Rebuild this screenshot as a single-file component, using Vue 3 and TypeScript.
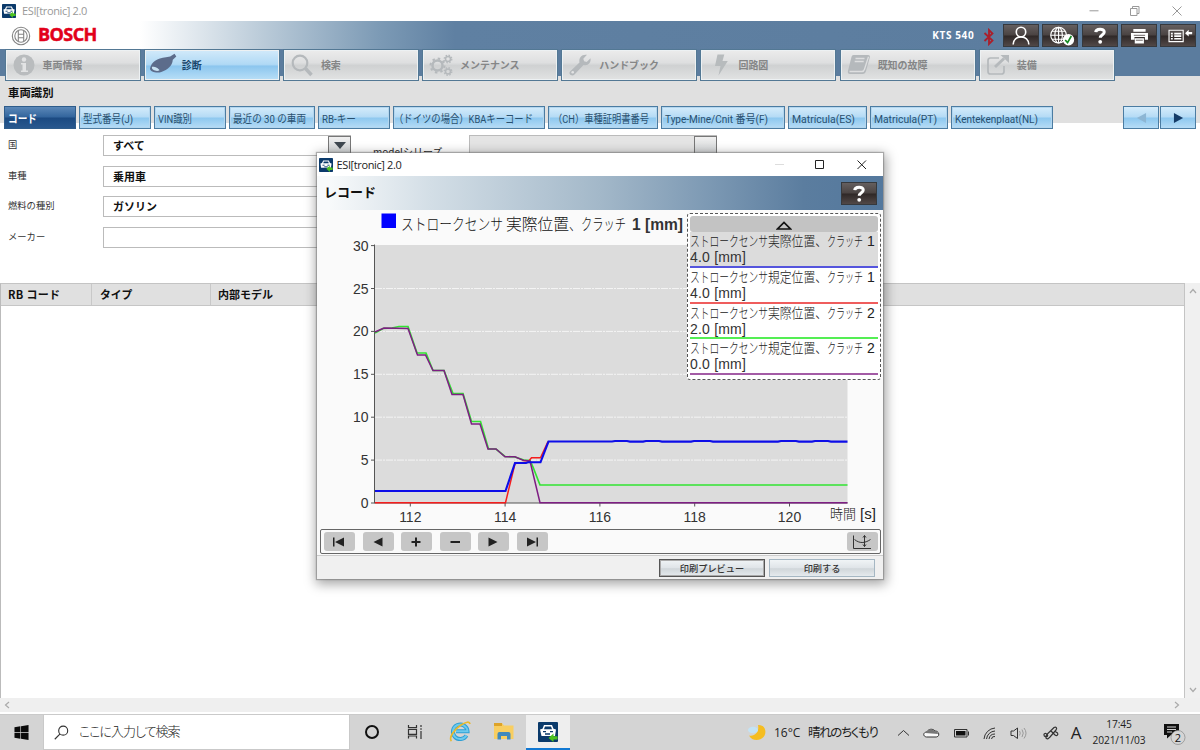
<script setup lang="ts">
interface Tab { label: string; icon: string; active?: boolean }
const tabs: Tab[] = [
  { label: '車両情報', icon: 'info' },
  { label: '診断', icon: 'plug', active: true },
  { label: '検索', icon: 'search' },
  { label: 'メンテナンス', icon: 'gears' },
  { label: 'ハンドブック', icon: 'wrench' },
  { label: '回路図', icon: 'bolt' },
  { label: '既知の故障', icon: 'book' },
  { label: '装備', icon: 'export' },
]

interface SubTab { label: string; width: number; text: number; pad?: number }
const subTabs: SubTab[] = [
  { label: 'コード', width: 72, text: 29 },
  { label: '型式番号(J)', width: 72, text: 50 },
  { label: 'VIN識別', width: 72, text: 34 },
  { label: '最近の 30 の車両', width: 86, text: 73 },
  { label: 'RB-キー', width: 72, text: 34 },
  { label: '（ドイツの場合）KBAキーコード', width: 152, text: 139, pad: -3 },
  { label: '（CH）車種証明書番号', width: 110, text: 96, pad: 1 },
  { label: 'Type-Mine/Cnit 番号(F)', width: 124, text: 103 },
  { label: 'Matrícula(ES)', width: 79, text: 63 },
  { label: 'Matricula(PT)', width: 78, text: 63 },
  { label: 'Kentekenplaat(NL)', width: 102, text: 83 },
]

const tools = ['user', 'globe', 'help', 'print', 'list']

const filters = [
  { label: '国', value: 'すべて' },
  { label: '車種', value: '乗用車' },
  { label: '燃料の種別', value: 'ガソリン' },
  { label: 'メーカー', value: '' },
]

const legend = [
  { kind: '実際位置、', clutch: '1', value: '4.0 [mm]', tone: 'blue' },
  { kind: '規定位置、', clutch: '1', value: '4.0 [mm]', tone: 'red' },
  { kind: '実際位置、', clutch: '2', value: '2.0 [mm]', tone: 'green' },
  { kind: '規定位置、', clutch: '2', value: '0.0 [mm]', tone: 'purple' },
]

const yTicks = [30, 25, 20, 15, 10, 5, 0].map((v) => ({ v, y: 503 - v * 8.58 }))
const xTicks = [112, 114, 116, 118, 120].map((v) => ({ v, x: 410.3 + (v - 112) * 47.4 }))

const series = [
  { tone: 'green', points: '375,333 383,328.5 392,328 399,326.5 408,326.5 417,353 426,353 433,370.5 444,370.5 453,393.5 463,393.5 471.5,421.5 480.5,421.5 488.5,449 496,449 505,456.5 515,457 524,460 530,460.5 533,467 540,485 847.5,485' },
  { tone: 'red', points: '375,502.7 505.5,502.7 515,463.5 528,462 531.5,457.7 540.5,457.7 548,441.5' },
  { tone: 'purple', points: '375,332 384,328 408,328.5 417.5,355 425.5,355 433,370.5 444,370.5 452,394.5 463,394.5 471.5,424 480,424 488,449 496,449 505,456.7 515,456.7 523,460.3 530,461 540,502.7 847.5,502.7' },
  { tone: 'blue', points: '375,491 505.5,491 515,463 526,463 528,462.3 540.5,462.3 548.5,441.5 612,441.5 615,441 627,441 630,441.6 643,441.6 646,441 659,441 662,441.6 691,441.6 694,441 710,441 713,441.6 778,441.6 781,441 796,441 799,441.6 812,441.6 815,441 828,441 831,441.6 847.5,441.6' },
]

const players = ['first', 'prev', 'plus', 'minus', 'next', 'last']
</script>

<template>
  <div class="screen">
    <header class="titlebar">
      <svg class="app-icon" viewBox="0 0 20 20"><rect width="20" height="20" rx="1" fill="#0b3a6b" /><path d="m2 8 2.300-.8L6 3.500h8l1.700 3.700L18 8l-1 6H3z" fill="#fff" /><path d="M7 5h6l1 2.500H6z" fill="#0b3a6b" /><path d="M5 10.300h3M12 10.300h3M7.500 12.600h5" stroke="#0b3a6b" stroke-width="1.300" /><path d="m10.500 15.500 5-4.500v2.700h4V17h-4v3z" fill="#4cc31e" /></svg>
      <span class="app-name">ESI[tronic] 2.0</span>
      <svg class="win-buttons faded" viewBox="0 0 100 20"><path d="M3.500 9.800h9M44.500 7.500h6.500v7h-6.500zM46.500 7.500v-2h6.500v7h-2M86.500 5.500l9 9M95.500 5.500l-9 9" /></svg>
    </header>

    <div class="brandbar">
      <svg class="emblem" viewBox="0 0 20 20"><circle cx="10" cy="10" r="8.700" /><circle cx="10" cy="10" r="6.200" /><path d="M7.300 4.600v10.800M12.700 4.600v10.800M7.300 8.200h5.400M7.300 11.800h5.400" /></svg>
      <span class="brand">BOSCH</span>
      <span class="device">KTS 540</span>
      <svg class="bluetooth" viewBox="0 0 14 18"><path d="m2.500 5 8 7.500L7 16V2l3.500 3.500-8 7.500" /></svg>
      <div class="tools">
        <button v-for="t in tools" :key="t" class="tool">
          <svg viewBox="0 0 36 22">
            <g v-if="t === 'user'" class="line"><circle cx="18" cy="7.300" r="5" /><path d="M9.700 20.500c.3-5 3.800-8 8.300-8s8 3 8.300 8" /></g>
            <g v-else-if="t === 'globe'">
              <g class="line thin"><circle cx="16.500" cy="10.700" r="8.300" /><ellipse cx="16.500" cy="10.700" rx="4" ry="8.300" /><path d="M16.500 2.500v16.500M8.200 10.700h16.600M9.500 6.500h14M9.500 15h14" /></g>
              <circle cx="27" cy="15.500" r="6" fill="#fff" /><path d="m23.500 15.800 2.500 2.700 4-7" fill="none" stroke="#168a23" stroke-width="1.800" />
            </g>
            <g v-else-if="t === 'help'"><path d="M13.500 7.500c.2-4 9-4.300 9-.2 0 3-4.200 2.700-4.200 6.200" fill="none" stroke="#fff" stroke-width="3.200" /><circle cx="18.200" cy="17.700" r="2" fill="#fff" /></g>
            <g v-else-if="t === 'print'"><path d="M12 4h13v3H12zM9.500 8.300h18v7.200h-3.300v-3h-11v3H9.500zM13.500 14h9.700v5.500h-9.700z" fill="#fff" /><path d="M14.700 16h7.300M12.500 10.800h12" stroke="#68605f" /></g>
            <g v-else><path d="M8.500 5.500h15v12h-15z" class="line thin" /><path d="M10.500 9h2M14 9h7.500M10.500 11.700h2M14 11.700h7.500M10.500 14.400h2M14 14.400h7.500" class="line" /><path d="m25.500 8.500 3.800-3.500v2.300H33v2.500h-3.700V12z" fill="#fff" /></g>
          </svg>
        </button>
      </div>
    </div>

    <nav class="tabs">
      <button v-for="t in tabs" :key="t.label" class="tab" :class="{ active: t.active }">
        <svg class="tab-icon" viewBox="0 0 28 24">
          <g v-if="t.icon === 'info'"><circle cx="14" cy="12" r="10.500" fill="#b9bcbe" /><circle cx="14" cy="6.500" r="2.200" fill="#e2e3e4" /><path d="M11 10h5v7.500h2V19h-7v-1.500h1.500v-6H11z" fill="#e2e3e4" /></g>
          <g v-else-if="t.icon === 'plug'"><path d="M1 15.500C2.500 9 8 5 17 4.300l4.200-.8L25.500.8l1.800 2.700-3.500 3.200c-.5 6.300-5 9.800-11.500 12.300-3.500 1.300-11.300.5-11.300-3.500z" fill="#5c6c8b" /><path d="M3 13.800c2-.6 6.500 1 7.500 3.500-2 1.500-8.500.3-7.500-3.500z" fill="#c8e2f2" /></g>
          <g v-else-if="t.icon === 'search'" fill="none" stroke="#b5b9bc"><circle cx="12" cy="10" r="7.300" stroke-width="2.200" /><path d="m17.500 15.500 6 6.500" stroke-width="3.500" /></g>
          <g v-else-if="t.icon === 'gears'" fill="none" stroke="#b5b9bc"><circle cx="10.500" cy="12.500" r="5" stroke-width="2.500" /><circle cx="10.500" cy="12.500" r="7" stroke-width="2" stroke-dasharray="2.500 3" /><circle cx="21" cy="6" r="2.500" stroke-width="1.500" /><circle cx="21" cy="6" r="3.800" stroke-width="1.300" stroke-dasharray="1.500 1.500" /><circle cx="21" cy="18.500" r="2.500" stroke-width="1.500" /><circle cx="21" cy="18.500" r="3.800" stroke-width="1.300" stroke-dasharray="1.500 1.500" /></g>
          <g v-else-if="t.icon === 'wrench'"><path d="m4 18.500 9.500-9C12.500 4.500 16 1 21 1.800l-3.700 4 .8 2.500 2.600.6 3.800-3.600c.8 4.700-2.800 8-7 6.700L8.500 21.500c-2.500 2.500-6.500-.5-4.500-3z" fill="#b5b9bc" /><circle cx="6.700" cy="19.300" r="1.300" fill="#e2e3e4" /></g>
          <g v-else-if="t.icon === 'bolt'"><path d="M12.500 1.500h6.800L17.500 8h5.300L13.500 22.500l2-9.500H10z" fill="#b7bbbd" /></g>
          <g v-else-if="t.icon === 'book'"><path d="M8.500 2h14.500c1.700 0 2.200 1 1.800 2.500L21 18c-.5 2-1.500 3-3.500 3H5c-2 0-2.500-1.500-2-3.300l3.300-13C6.700 2.800 7.200 2 8.500 2z" fill="#b5b9bc" /><path d="M10.500 5.500h9M9.700 8.500h9M4.500 18.500H17c1.500 0 2-.5 2.500-2.200l4-12.500" fill="none" stroke="#dedfe0" stroke-width="1.300" /></g>
          <g v-else fill="none" stroke="#b5b9bc" stroke-width="1.700"><path d="M15 5H6.500Q4 5 4 7.500v11Q4 21 6.500 21h11q2.500 0 2.500-2.500V13" /><path d="m11 14 9-8.500" stroke-width="3" /><path d="M16.500 2H25v8z" fill="#b5b9bc" stroke="none" /></g>
        </svg>
        <span>{{ t.label }}</span>
      </button>
    </nav>

    <section class="subhead">
      <h1>車両識別</h1>
      <div class="subtabs">
        <button v-for="(s, i) in subTabs" :key="s.label" class="subtab" :class="{ selected: i === 0 }" :style="{ width: s.width + 'px' }">
          <svg class="subtab-label" height="20" :width="s.width - 2"><text :x="3 + (s.pad ?? 0)" y="14.500" :textLength="s.text" lengthAdjust="spacingAndGlyphs">{{ s.label }}</text></svg>
        </button>
        <div class="pager">
          <button class="page-btn"><svg viewBox="0 0 12 12"><path d="M11 .5v11L1 6z" fill="#8db6d4" /></svg></button>
          <button class="page-btn"><svg viewBox="0 0 12 12"><path d="M1 .5v11L11 6z" fill="#153c68" /></svg></button>
        </div>
      </div>
    </section>

    <main class="content">
      <div class="form">
        <div class="filters">
          <label v-for="(f, i) in filters" :key="f.label" class="filter">
            <span class="filter-name">{{ f.label }}</span>
            <span class="field"><b>{{ f.value }}</b><i v-if="i === 0" class="drop"><svg viewBox="0 0 12 8"><path d="M0 0h12L6 7z" fill="#3f4850" /></svg></i></span>
          </label>
        </div>
        <div class="series-filter"><span>modelシリーズ</span><span class="field disabled"><i class="drop"></i></span></div>
      </div>
      <div class="results">
        <div class="table">
          <div class="thead"><span class="c1">RB コード</span><span class="c2">タイプ</span><span class="c3">内部モデル</span></div>
        </div>
        <div class="vscroll">
          <svg viewBox="0 0 8 6"><path d="m1 5 3-3.500L7 5" /></svg>
          <svg viewBox="0 0 8 6"><path d="m1 1 3 3.500L7 1" /></svg>
        </div>
      </div>
    </main>
    <div class="hscroll">
      <svg viewBox="0 0 6 8"><path d="M5 1 1.500 4 5 7" /></svg>
      <svg viewBox="0 0 6 8"><path d="m1 1 3.500 3L1 7" /></svg>
    </div>

    <footer class="taskbar">
      <div class="start"><svg viewBox="0 0 16 16"><path d="M.5 2.300 6.800 1.400v6.100H.5zM7.500 1.300 15.500 0v7.500h-8zM.5 8.300h6.300v6.300l-6.300-1zM7.500 8.300h8V16l-8-1.300z" fill="#0a0a0a" /></svg></div>
      <div class="search">
        <svg viewBox="0 0 16 16"><circle cx="9.800" cy="6" r="4.800" /><path d="M6.500 9.500.8 15.200" /></svg>
        <span>ここに入力して検索</span>
      </div>
      <div class="launchers">
        <div class="launch"><svg viewBox="0 0 24 24"><circle cx="12" cy="12" r="6" fill="none" stroke="#111" stroke-width="2" /></svg></div>
        <div class="launch"><svg viewBox="0 0 24 24"><path d="M4.500 5v2.500h8V5M4.500 18.500V16h8v2.500M4.500 9.300h8v5h-8zM17 5v2M17 11v8M16 9h2" fill="none" stroke="#333" stroke-width="1.200" /></svg></div>
        <div class="launch"><svg viewBox="0 0 24 24"><path d="M18.500 15.500a7.300 7.300 0 1 1 1-4.300H8" fill="none" stroke="#2c9fd5" stroke-width="4" /><path d="M18.500 15.500a7.300 7.300 0 1 1 1-4.300H8" fill="none" stroke="#6cc9ed" stroke-width="2" /><path d="M3.500 21c-3-2.500 2-11.500 9.500-16C18 2 21.500 1 22 4" fill="none" stroke="#e9b92c" stroke-width="1.700" /></svg></div>
        <div class="launch"><svg viewBox="0 0 24 24"><path d="M2 3h8l2 2.500h9.500V19H2z" fill="#f8ce61" /><path d="M2 3h8v3H2z" fill="#dda329" /><path d="M5.500 19.500V14q0-2 2-2h9q2 0 2 2v5.500h-3.500V16H9v3.500z" fill="#4089bd" /></svg></div>
        <div class="launch current"><svg class="big-app" viewBox="0 0 20 20"><rect width="20" height="20" rx="1" fill="#0b3a6b" /><path d="m2 7.500 2.500-.8L6 3h8l1.500 3.700 2.500.8-1 6.500H3.500z" fill="#fff" /><path d="M7 4.500h6l1 2.700H6z" fill="#0b3a6b" /><path d="M5 9.600h3M12 9.600h3M7 12h5" stroke="#0b3a6b" stroke-width="1.300" /><path d="m10.500 16 5-4.500v2.700h4v3.300h-4V20z" fill="#4cc31e" /></svg></div>
      </div>
      <div class="tray">
        <svg class="moon" viewBox="0 0 20 20"><path d="M11 2c8-.5 9 8 5.500 12S5 18.500 2 12.500c6 1.500 10.500-4 9-10.500z" fill="#f5bd21" /><ellipse cx="6" cy="7" rx="5" ry="3.300" fill="#c3e3f5" /></svg>
        <span class="temp">16°C</span><span class="weather">晴れのちくもり</span>
        <svg class="status" viewBox="0 0 176 20">
          <path d="m3 12.500 5.500-5 5.500 5" />
          <path d="M31.500 14c-4-.5-3.500-5 .5-5 1.500-3.500 6-3.500 8-1 4-.3 5.500 5.500 1.300 6z" fill="#fafafa" /><path d="M30.500 10c1.500-4 7-5 9-2 2 0 3.500 1.500 3.500 3z" fill="#777" stroke="none" />
          <path d="M59.500 6.500H72v7.500H59.500z" /><path d="M61 8h9.500v4.500H61z" fill="#111" stroke="none" /><path d="M73.500 8.500v4" />
          <path d="M89 16A12 12 0 0 1 100 5M91.500 16a9 9 0 0 1 8.500-8M94 16a6 6 0 0 1 6-5M96.500 16a3 3 0 0 1 3.500-2.500" />
          <path d="M116 8h2.500l4-3v10.500l-4-3H116z" /><path d="M124.500 8q1.500 2 0 4.500M127 6.500q2.500 3.500 0 7.500M129 5q4 5 0 10.500" class="mute" />
          <path d="M151 15c-1-3 2-4.500 4-6.500l4-4c2-1 3.500.5 2 2.500l-6 7c-2 2-2.500 2.500-4 1zM151 14c-3-1-2.500-4 0-3.500s2 3.500 0 3.500M156 8l4 4c2 1.500 3.500-.5 2.500-2l-3-2" stroke-width="1.200" />
        </svg>
        <span class="ime">A</span>
        <div class="clock"><span>17:45</span><span>2021/11/03</span></div>
        <svg class="notice" viewBox="0 0 24 24"><path d="M1 3h15v11H8l-4 3.500V14H1z" fill="#111" /><path d="M4 6h9M4 8.500h9M4 11h5" stroke="#d4d4d4" /><circle cx="15" cy="16.500" r="7" fill="#d5d5d5" stroke="#888" stroke-width=".7" /><text x="15" y="20.500" text-anchor="middle">2</text></svg>
      </div>
    </footer>

    <div class="dialog">
      <div class="dlg-title">
        <svg class="app-icon" viewBox="0 0 20 20"><rect width="20" height="20" rx="1" fill="#0b3a6b" /><path d="m2 8 2.300-.8L6 3.500h8l1.700 3.700L18 8l-1 6H3z" fill="#fff" /><path d="M7 5h6l1 2.500H6z" fill="#0b3a6b" /><path d="M5 10.300h3M12 10.300h3M7.500 12.600h5" stroke="#0b3a6b" stroke-width="1.300" /><path d="m10.500 15.500 5-4.500v2.700h4V17h-4v3z" fill="#4cc31e" /></svg>
        <span class="app-name">ESI[tronic] 2.0</span>
        <svg class="win-buttons" viewBox="0 0 100 20"><path d="M3 9.500h9" stroke="#ddd" /><path d="M43.500 5.500h8v8h-8zM85.500 5.500l8.500 8.500M94 5.500 85.500 14" /></svg>
      </div>
      <div class="dlg-head">
        <h2>レコード</h2>
        <button class="tool"><svg viewBox="0 0 36 22"><path d="M13.500 7.500c.2-4 9-4.300 9-.2 0 3-4.200 2.700-4.200 6.200" fill="none" stroke="#fff" stroke-width="3.200" /><circle cx="18.200" cy="17.700" r="2" fill="#fff" /></svg></button>
      </div>
      <div class="dlg-body">
        <svg class="chart" viewBox="317 210 566 318">
          <rect x="381.500" y="213.500" width="14.500" height="14.500" fill="#00f" />
          <g class="chart-title">
            <text x="401" y="229.500" textLength="102" lengthAdjust="spacingAndGlyphs">ストロークセンサ</text>
            <text x="506" y="229.500" textLength="63" lengthAdjust="spacingAndGlyphs">実際位置</text>
            <text x="569" y="229.500" textLength="12" lengthAdjust="spacingAndGlyphs">、</text>
            <text x="581" y="229.500" textLength="45" lengthAdjust="spacingAndGlyphs">クラッチ</text>
            <text x="632" y="229.500" class="strong" textLength="51" lengthAdjust="spacingAndGlyphs">1 [mm]</text>
          </g>
          <rect x="375" y="245" width="472.500" height="258" fill="#dcdcdc" />
          <g v-for="t in yTicks" :key="t.v">
            <path v-if="t.v > 0 && t.v < 30" :d="`M375 ${t.y}H847`" class="grid" />
            <path :d="`M371 ${t.y}h4`" class="axis" />
            <text class="tick" x="368.500" :y="t.y + 5" text-anchor="end">{{ t.v }}</text>
          </g>
          <path d="M374.500 244.500V503H847.500" class="axis" />
          <g v-for="t in xTicks" :key="t.v">
            <path :d="`M${t.x} 503v3.500`" class="axis" />
            <text class="tick" :x="t.x" y="522" text-anchor="middle">{{ t.v }}</text>
          </g>
          <polyline v-for="s in series" :key="s.tone" :points="s.points" :class="['trace', s.tone]" />
          <text class="unit" x="830" y="519" textLength="26" lengthAdjust="spacingAndGlyphs">時間</text>
          <text class="unit" x="860" y="519" textLength="16" lengthAdjust="spacingAndGlyphs">[s]</text>
        </svg>
        <div class="player">
          <button v-for="p in players" :key="p" class="play">
            <svg viewBox="0 0 30 18">
              <path v-if="p === 'first'" d="M9 4.500h1.500v9H9zM20 4.500v9l-9-4.500z" />
              <path v-else-if="p === 'prev'" d="M19.500 4.500v9L10.500 9z" />
              <path v-else-if="p === 'plus'" d="M14 4.500h2V8h3.500v2H16v3.500h-2V10h-3.500V8H14z" />
              <path v-else-if="p === 'minus'" d="M10.500 8h9.500v2h-9.500z" />
              <path v-else-if="p === 'next'" d="M10.500 4.500v9l9-4.500z" />
              <path v-else d="M10 4.500v9L19 9zM19.500 4.500H21v9h-1.500z" />
            </svg>
          </button>
          <button class="play scale"><svg viewBox="0 0 30 18"><path d="M6.500 2.500V15.500H24M7.500 6.500c5 4 10 4 16 0M17.500 2.500v11M16 4.500l1.500-2 1.500 2M16 11.500l1.500 2 1.500-2" fill="none" stroke="#333" /></svg></button>
        </div>
        <div class="legend">
          <div class="legend-top"><svg viewBox="0 0 16 9"><path d="M1.500 8h13L8 1.500z" /></svg></div>
          <div v-for="(l, i) in legend" :key="i" class="entry" :class="[l.tone, { picked: i === 0 }]">
            <svg viewBox="0 0 188 18">
              <text x="0" y="14" textLength="78" lengthAdjust="spacingAndGlyphs">ストロークセンサ</text>
              <text x="78" y="14" textLength="59" lengthAdjust="spacingAndGlyphs">{{ l.kind }}</text>
              <text x="137" y="14" textLength="36" lengthAdjust="spacingAndGlyphs">クラッチ</text>
              <text x="177" y="13.500" class="num">{{ l.clutch }}</text>
            </svg>
            <span>{{ l.value }}</span>
          </div>
        </div>
      </div>
      <div class="dlg-foot">
        <button class="action focus">印刷プレビュー</button>
        <button class="action">印刷する</button>
      </div>
    </div>
  </div>
</template>

<style>
html, body { margin: 0; overflow: hidden; background: #fff; }
</style>

<style scoped>
* { box-sizing: border-box; }
button { padding: 0; margin: 0; font: inherit; color: inherit; border-radius: 0; flex: none; }
svg { flex: none; display: block; }
.screen { position: relative; width: 1200px; height: 750px; overflow: hidden; display: flex; flex-direction: column; background: #fff; font-family: Roboto, "Noto Sans CJK JP", sans-serif; color: #222; }
.titlebar { height: 21px; flex: none; display: flex; align-items: center; padding-left: 2px; }
.app-icon { width: 14px; height: 14px; }
.app-name { margin-left: 6px; font: 11px "Open Sans", sans-serif; letter-spacing: -0.38px; color: #999; white-space: nowrap; }
.win-buttons { width: 100px; height: 20px; margin-left: auto; fill: none; stroke: #222; stroke-width: 1; }
.titlebar .win-buttons { margin-right: 14px; }
.faded { stroke: #999; }
.brandbar { height: 29px; flex: none; display: flex; align-items: center; padding: 0 4px 0 11px; background: linear-gradient(90deg, #fff 0, #fff 140px, #b9cad8 265px, #7c9ab5 380px, #5f80a2 455px, #5b7c9e 100%); }
.emblem { width: 20px; height: 20px; fill: none; stroke: #858585; stroke-width: 1.100; }
.brand { margin: -3px 0 0 7px; font: bold 18px/22px "Open Sans", sans-serif; letter-spacing: -0.55px; color: #e2001a; -webkit-text-stroke: 0.5px #e2001a; }
.device { margin: -2px 0 0 auto; font: bold 10px "Open Sans", sans-serif; letter-spacing: 0.6px; color: #fff; }
.bluetooth { width: 14px; height: 18px; margin: 2px 7px 0 8px; fill: none; stroke: #ab1e2a; stroke-width: 1.800; }
.tools { display: flex; gap: 3.200px; }
.tool { width: 36px; height: 23px; border: 1px solid #36393d; background: linear-gradient(#655f5f, #4a4342 48%, #2f2827 52%, #514847); }
.tool svg { width: 34px; height: 21px; }
.line { fill: none; stroke: #fff; stroke-width: 1.700; }
.thin { stroke-width: 1.200; }
.tabs { height: 32px; flex: none; display: flex; gap: 3.200px; padding-left: 4.500px; margin-top: -1px; background: linear-gradient(#5b7c9e 27px, #e0e0e0 27px); }
.tab { width: 136px; height: 32px; display: flex; align-items: center; padding: 0 0 1px 4px; border: 1px solid #537894; background: linear-gradient(#ececec, #dedfe0 42%, #cfd1d2 52%, #e2e3e3); color: #858687; font: bold 10px "Noto Sans CJK JP", sans-serif; box-shadow: inset 0 0 0 1px #edf1f3; }
.tab-icon { width: 28px; height: 24px; margin-right: 5px; }
.tab span { letter-spacing: -0.050px; }
.tab.active { background: linear-gradient(#d2eafa, #b0d9f5 48%, #8cc6ee 54%, #b9dff7); color: #17446b; }
.subhead { height: 42px; flex: none; background: #e0e0e0; }
.subhead h1 { margin: 0; padding: 2px 0 0 8px; height: 25px; font: bold 11.400px/19px "Noto Sans CJK JP", sans-serif; color: #111; }
.subtabs { display: flex; gap: 3px; padding: 0 4px; }
.subtab { height: 23px; border: 1px solid #4b7ca2; background: linear-gradient(#d5ecfb, #b5dbf5 47%, #8ec8ef 53%, #b6dcf6); box-shadow: inset 0 0 0 1px #b4d6ee; }
.subtab-label { fill: #29506f; font-size: 11px; overflow: visible; }
.subtab.selected { background: linear-gradient(#5b88b8, #33659d 47%, #1b4a82 53%, #28588e); border-color: #2e5c8b; box-shadow: none; }
.selected .subtab-label { fill: #fff; font-weight: bold; }
.pager { display: flex; margin-left: auto; gap: 1px; }
.page-btn { width: 36px; height: 23px; display: grid; place-items: center; border: 1px solid #4b7ca2; background: linear-gradient(#d5ecfb, #b5dbf5 47%, #8ec8ef 53%, #b6dcf6); }
.page-btn svg { width: 11px; height: 12px; }
.content { flex: 1; min-height: 0; display: flex; flex-direction: column; }
.form { height: 160px; flex: none; padding: 12px 8px 0; display: flex; }
.filters { width: 343px; display: flex; flex-direction: column; gap: 9.600px; }
.filter { height: 21px; display: flex; }
.filter-name { width: 95px; font: 9.300px/18px "Noto Sans CJK JP", sans-serif; color: #333; }
.field { flex: 1; display: flex; justify-content: space-between; border: 1px solid #bbb; padding-left: 9px; }
.field b { font: bold 11px/18px "Noto Sans CJK JP", sans-serif; color: #111; }
.drop { width: 23px; margin: 0 -1px 0 0; display: grid; place-items: center; border: 1px solid #777; background: linear-gradient(#f0f0f0, #cdd0d2); }
.drop svg { width: 12px; height: 8px; }
.series-filter { display: flex; margin-left: 22px; }
.series-filter > span:first-child { width: 96px; padding-top: 8px; font: 10px/18px "Noto Sans CJK JP", sans-serif; }
.field.disabled { flex: none; width: 248px; height: 22px; background: #e4e4e4; }
.disabled .drop { margin-left: auto; }
.results { flex: 1; display: flex; min-height: 0; }
.table { width: 1185px; border: 1px solid #c4c4c4; border-bottom: 0; border-left-color: #bbb; }
.thead { height: 22px; display: flex; background: #e0e0e0; border-bottom: 1px solid #c6c6c6; font: bold 10.800px/20px "Noto Sans CJK JP", sans-serif; color: #111; white-space: pre; }
.thead span { padding-left: 7px; border-right: 1px solid #c8c8c8; }
.thead .c1 { width: 91px; font-size: 11px; letter-spacing: .3px; }
.thead .c2 { width: 119px; padding-left: 8px; }
.thead .c3 { width: 200px; font-size: 11px; }
.vscroll { flex: 1; background: #f0f0f0; display: flex; flex-direction: column; justify-content: space-between; align-items: center; padding: 5px 0; fill: none; stroke: #aaa; stroke-width: 1.200; }
.vscroll svg { width: 8px; height: 6px; }
.hscroll { height: 14px; margin-bottom: 2px; flex: none; background: #efefef; display: flex; align-items: center; justify-content: space-between; padding: 0 20px 0 4px; fill: none; stroke: #aaa; stroke-width: 1.200; }
.hscroll svg { width: 6px; height: 8px; }
.taskbar { height: 36px; flex: none; display: flex; background: #d4d4d4; border-top: 1px solid #cacaca; }
.start { width: 43px; display: grid; place-items: center; }
.start svg { width: 15px; height: 15px; }
.search { width: 307px; height: 35px; background: #fff; border: 1px solid #c9c9c9; border-top: 0; display: flex; align-items: center; padding-left: 10px; gap: 10px; }
.search svg { width: 15px; height: 15px; fill: none; stroke: #333; stroke-width: 1.200; }
.search span { font: 300 13px "Noto Sans CJK JP", sans-serif; font-feature-settings: "palt"; letter-spacing: -1px; padding-bottom: 3px; color: #222; }
.launchers { display: flex; }
.launch { width: 44px; display: grid; place-items: center; padding-bottom: 2px; }
.launch svg { width: 24px; height: 24px; }
.launch.current { background: #eee; border-bottom: 2px solid #1279d3; padding: 0; }
.launch .big-app { width: 20px; height: 20px; }
.tray { margin-left: auto; display: flex; align-items: center; color: #222; }
.moon { width: 20px; height: 20px; margin: 0 7px 0 -1px; }
.temp { width: 34px; font: 12px "Open Sans", sans-serif; white-space: nowrap; }
.weather { width: 71px; font: 12.500px "Noto Sans CJK JP", sans-serif; font-feature-settings: "palt"; letter-spacing: -1.350px; white-space: nowrap; padding-bottom: 2px; }
.status { width: 176px; height: 20px; margin-left: 16px; margin-right: -8px; fill: none; stroke: #333; stroke-width: 1; }
.mute { stroke: #999; }
.ime { width: 26px; text-align: center; margin-right: 1px; font: 17px "Open Sans", sans-serif; }
.clock { width: 58px; display: flex; flex-direction: column; align-items: center; padding-bottom: 2px; font: 10.200px/16px "Open Sans", sans-serif; letter-spacing: -.1px; }
.notice { width: 24px; height: 24px; margin: 0 13px 0 15px; }
.notice text { font: 11px "Open Sans", sans-serif; fill: #111; }
.dialog { position: absolute; left: 317px; top: 153px; width: 566px; height: 426px; display: flex; flex-direction: column; background: #fafafa; box-shadow: 0 0 1px 1px rgba(110, 110, 110, .5), 1px 3px 11px 2px rgba(0, 0, 0, .36); }
.dlg-title { height: 23px; flex: none; display: flex; align-items: center; padding-left: 2px; background: #fff; }
.dlg-title .app-name { margin-left: 3.500px; color: #222; }
.dlg-title .win-buttons { margin-right: 11px; }
.dlg-head { height: 34px; flex: none; display: flex; justify-content: space-between; align-items: center; padding: 0 6px 0 7px; background: linear-gradient(90deg, #f8fafb 2%, #d3dee6 20%, #a3b8c9 50%, #7f9bb5 68%, #5b7d9f 86%, #54789d); }
.dlg-head h2 { margin: 0; font: bold 13px/30px "Noto Sans CJK JP", sans-serif; color: #111; padding-bottom: 2px; }
.dlg-body { position: relative; flex: 1; display: flex; flex-direction: column; }
.chart { width: 566px; height: 318px; }
.chart-title { font: 300 16px "Noto Sans CJK JP", sans-serif; fill: #111; }
.strong { font: bold 16px "Liberation Sans", sans-serif; fill: #333; }
.grid { stroke: #f4f4f4; stroke-width: 1; stroke-dasharray: 7 1 2 1; }
.axis { stroke: #555; stroke-width: 1; fill: none; }
.tick { font: 14px "Liberation Sans", sans-serif; fill: #333; }
.unit { font: 300 14px "Liberation Sans", "Noto Sans CJK JP", sans-serif; fill: #222; }
.trace { fill: none; stroke-width: 1.500; }
.trace.green { stroke: #32e332; stroke-width: 1.700; }
.trace.red { stroke: #f51d1d; }
.trace.purple { stroke: #7e1e83; }
.trace.blue { stroke: #0d0de8; stroke-width: 2.100; }
.player { height: 25px; margin: 1px 2px 0 3px; display: flex; align-items: center; gap: 7.600px; padding: 0 2px 0 3px; border: 1px solid #666; border-radius: 2px; }
.play { width: 31px; height: 19px; border: 0; border-radius: 3px; background: #c6c6c6; }
.play svg { width: 30px; height: 18px; fill: #222; }
.play.scale { margin-left: auto; }
.legend { position: absolute; left: 370px; top: 3px; width: 194px; height: 167px; padding: 2px; border: 1px dashed #555; border-radius: 3px; background: #fff; }
.legend-top { height: 16px; width: 188px; display: grid; place-items: center; border-radius: 3px; background: #c3c3c3; }
.legend-top svg { width: 16px; height: 9px; margin-top: 3px; fill: none; stroke: #111; stroke-width: 1.700; }
.entry { width: 188px; height: 35.800px; border-bottom: 2px solid; color: #333; }
.entry.picked { background: #dcdcdc; }
.entry svg { width: 188px; height: 18px; overflow: visible; fill: #222; font: 300 14px "Noto Sans CJK JP", sans-serif; }
.entry .num, .entry span { font: 14px/15.500px "Liberation Sans", sans-serif; }
.entry span { display: block; letter-spacing: .2px; }
.entry.blue { border-color: #5555dd; }
.entry.red { border-color: #ef5d5d; }
.entry.green { border-color: #54ee54; }
.entry.purple { border-color: #a35ba5; }
.dlg-foot { height: 24px; flex: none; display: flex; justify-content: flex-end; gap: 4px; padding: 3px 8px 2px; background: #f0f0f0; border-top: 1px solid #ccc; }
.action { width: 106px; height: 18px; border: 1px solid #a5b7c3; background: linear-gradient(#f0f4f6, #dfe4e8 50%, #d0d6da 54%, #e5eaed); font: 500 9.200px/14px "Noto Sans CJK JP", sans-serif; color: #333; }
.action.focus { border: 1px solid #555; box-shadow: inset 0 0 0 1px #aaa; }
</style>
